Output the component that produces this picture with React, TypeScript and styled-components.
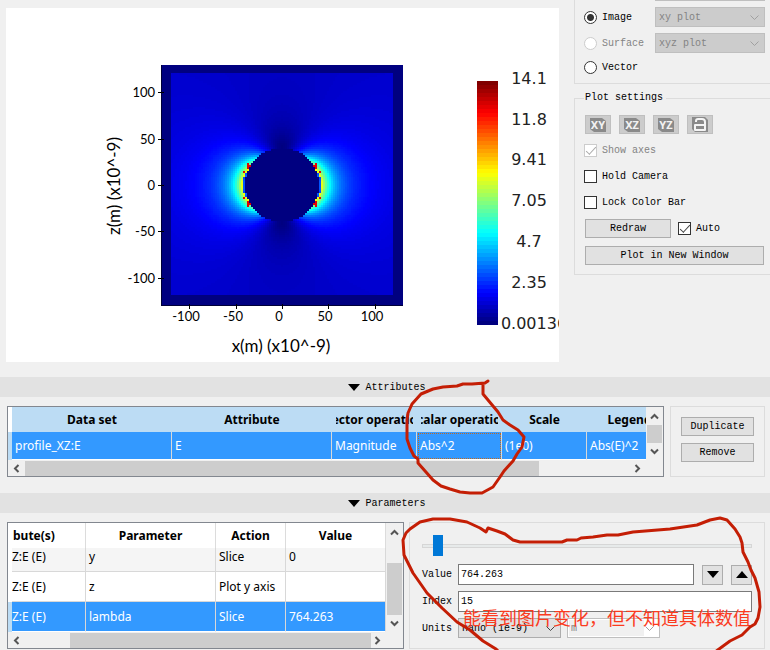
import React, { useState } from "react";
import styled, { createGlobalStyle, css } from "styled-components";

const uiFont = `"Liberation Mono", "Noto Sans CJK SC", monospace`;
const tableFont = `"Noto Sans", "Open Sans", sans-serif`;

const GlobalStyle = createGlobalStyle`
  *, *::before, *::after { box-sizing: border-box; }
  body {
    margin: 0;
    background: #f0f0f0;
    color: #000;
    font: 10px/13px ${uiFont};
  }
  button, input, select { font: inherit; color: inherit; margin: 0; }
`;

/* ---------- field plot data ---------- */

const channel = (x: number) => Math.round(255 * Math.max(0, Math.min(1, x)));

function jet(t: number) {
  const v = Math.max(0, Math.min(1, t));
  const r = channel(1.5 - Math.abs(4 * v - 3));
  const g = channel(1.5 - Math.abs(4 * v - 2));
  const b = channel(1.5 - Math.abs(4 * v - 1));
  return `rgb(${r},${g},${b})`;
}

const FIELD = { left: 155, top: 57, right: 397, bottom: 298, cx: 276, cy: 177, radius: 38 };

const HOT_CELLS = new Set([
  "-34,-20", "-32,-20", "-34,-18", "-34,-22", "-38,-14",
  "-34,18", "-32,18", "-34,16", "-34,20", "-38,12",
]);

function fieldValue(dx: number, dy: number) {
  const r = Math.hypot(dx, dy);
  const side = Math.abs(dx);
  if (HOT_CELLS.has(`${-Math.floor(side / 2) * 2},${Math.floor(dy / 2) * 2}`)) return 0.9;
  if (r < FIELD.radius - 1) return 0;
  const c = dx / r;
  const s = dy / r;
  const wide = 3.36 * Math.pow(37 / r, 2.4);
  const close = 1.1 * Math.pow(37 / r, 3);
  const ex = 1 + wide * c * c - close;
  const ey = wide * c * s;
  const value = (ex * ex + ey * ey) / 14.1;
  if (r < FIELD.radius + 1 && Math.abs(c) > 0.95) return value * 0.3;
  return value;
}

function buildField() {
  const groups = new Map<string, string[]>();
  for (let y = FIELD.top; y < FIELD.bottom; y += 2) {
    const h = Math.min(2, FIELD.bottom - y);
    let start = FIELD.left;
    let current = "";
    const flush = (end: number) => {
      if (!current) return;
      const list = groups.get(current) ?? [];
      list.push(`M${start} ${y}h${end - start}v${h}h${start - end}z`);
      groups.set(current, list);
    };
    for (let x = FIELD.left; x < FIELD.right; x += 2) {
      const absorbing = x < 165 || x >= 387 || y < 64 || y >= 287;
      const value = absorbing ? 0 : fieldValue(x + 1 - FIELD.cx, y + 1 - FIELD.cy);
      const color = jet(Math.round(value * 255) / 255);
      if (color !== current) {
        flush(x);
        current = color;
        start = x;
      }
    }
    flush(FIELD.right);
  }
  return Array.from(groups, ([color, parts]) => ({ color, d: parts.join("") }));
}

const fieldPaths = buildField();
const BAR_STEPS = 61;

const yTicks = [["100", 84], ["50", 131], ["0", 177], ["-50", 223], ["-100", 270]] as const;
const xTicks = [["-100", 183], ["-50", 230], ["0", 276], ["50", 322], ["100", 369]] as const;
const barLabels = [
  ["14.1", 76, 523], ["11.8", 117, 523], ["9.41", 157, 523], ["7.05", 198, 523],
  ["4.7", 239, 523], ["2.35", 280, 523], ["0.00136", 321, 528],
] as const;

/* ---------- page ---------- */

const Page = styled.main`
  position: relative;
  min-height: 100vh;
  overflow: hidden;
`;

const TopRow = styled.section`
  display: flex;
  align-items: flex-start;
  gap: 15px;
  padding-left: 6px;
  margin-bottom: 15px;
`;

const PlotPanel = styled.div`
  flex: 1;
  min-width: 0;
  margin-top: 8px;
  background: #fff;
  overflow: hidden;
`;

const PlotSvg = styled.svg`
  display: block;
  margin: 0 auto;
  max-width: 100%;
`;

const AxisText = styled.text<{ $size: number }>`
  font-family: Lato, sans-serif;
  font-size: ${(p) => p.$size}px;
`;

const BarText = styled.text`
  font-family: "DejaVu Sans", sans-serif;
  font-weight: 400;
  font-size: 16px;
  fill: #222;
`;

function FieldPlot() {
  return (
    <PlotSvg width="553" height="354" viewBox="0 0 553 354" role="img" aria-label="Field intensity">
      <g shapeRendering="crispEdges">
        {fieldPaths.map((p) => <path key={p.color} d={p.d} fill={p.color} />)}
        <path d="M155.5 57V298M155 297.5H397" stroke="#000038" fill="none" />
        {Array.from({ length: BAR_STEPS }, (_, i) => (
          <rect key={i} x="471" y={73 + i * 4} width="21" height="4" fill={jet(1 - i / (BAR_STEPS - 1))} />
        ))}
        {yTicks.map(([label, y]) => <path key={label} d={`M152 ${y}.5h6`} stroke="#000" />)}
        {xTicks.map(([label, x]) => <path key={label} d={`M${x}.5 296v5`} stroke="#000" />)}
      </g>
      {yTicks.map(([label, y]) => (
        <AxisText key={label} $size={13} x="149" y={y + 5} textAnchor="end">{label}</AxisText>
      ))}
      {xTicks.map(([label, x]) => (
        <AxisText key={label} $size={13} x={x - 3} y="313" textAnchor="middle">{label}</AxisText>
      ))}
      <AxisText $size={17} x="275" y="344" textAnchor="middle">x(m) (x10^-9)</AxisText>
      <AxisText $size={17} transform="translate(114 178) rotate(-90)" textAnchor="middle">z(m) (x10^-9)</AxisText>
      {barLabels.map(([label, y, x]) => (
        <BarText key={label} x={x} y={y} textAnchor="middle">{label}</BarText>
      ))}
    </PlotSvg>
  );
}

/* ---------- controls ---------- */

const Sidebar = styled.aside`
  flex: 0 0 196px;
`;

const groupBorder = css`
  border: 1px solid #dcdcdc;
`;

const TypeGroup = styled.div`
  ${groupBorder}
  border-top: 0;
  border-right: 0;
  display: flex;
  flex-direction: column;
  gap: 6px;
  height: 84px;
  padding: 0 5px 0 9px;
`;

const HiddenSelectEdge = styled.div`
  height: 1px;
  margin-left: 71px;
  background: #bfbfbf;
`;

const TypeRow = styled.div`
  display: flex;
  align-items: center;
  justify-content: space-between;
  min-height: 16px;
`;

const CheckLabel = styled.label<{ $disabled?: boolean }>`
  display: flex;
  align-items: center;
  gap: 5px;
  color: ${(p) => (p.$disabled ? "#838383" : "#000")};
`;

const Radio = styled.input.attrs({ type: "radio" })`
  appearance: none;
  width: 13px;
  height: 13px;
  border: 1px solid #333;
  border-radius: 50%;
  background: #fff;
  &:checked { background: radial-gradient(circle, #333 0 3px, #fff 4px); }
  &:disabled { border-color: #ccc; }
`;

const Check = styled.input.attrs({ type: "checkbox" })`
  appearance: none;
  display: grid;
  place-items: center;
  width: 13px;
  height: 13px;
  border: 1px solid #333;
  background: #fff;
  &:checked::before {
    content: "";
    width: 10px;
    height: 5px;
    border: solid #444;
    border-width: 0 0 1px 1px;
    transform: translateY(-1px) rotate(-47deg);
  }
  &:disabled { border-color: #ccc; }
  &:disabled:checked::before { border-color: #aaa; }
`;

const SelectFrame = styled.span<{ $tone: "grey" | "button" | "white"; $width: number }>`
  display: flex;
  align-items: center;
  flex: 0 0 ${(p) => p.$width}px;
  height: 20px;
  padding-right: 4px;
  border: 1px solid ${(p) => (p.$tone === "button" ? "#adadad" : "#bfbfbf")};
  background: ${(p) => ({ grey: "#ccc", button: "#e1e1e1", white: "#fff" })[p.$tone]};
  color: ${(p) => (p.$tone === "button" ? "#000" : "#838383")};
  select {
    appearance: none;
    flex: 1;
    min-width: 0;
    height: 16px;
    margin-left: 1px;
    padding: 0 2px;
    border: 0;
    background: ${(p) => (p.$tone === "white" ? "#f0f0f0" : "transparent")};
    opacity: 1;
  }
  svg { flex: none; color: ${(p) => (p.$tone === "button" ? "#444" : "#a0a0a0")}; }
`;

function Chevron() {
  return (
    <svg width="11" height="7" viewBox="0 0 11 7" aria-hidden="true">
      <path d="M1.5 1.5l4 4 4-4" fill="none" stroke="currentColor" />
    </svg>
  );
}

function Combo(props: { label: string; value: string; tone: "grey" | "button" | "white"; width: number; id?: string }) {
  return (
    <SelectFrame $tone={props.tone} $width={props.width}>
      <select id={props.id} aria-label={props.label} disabled={props.tone !== "button"}>
        <option>{props.value}</option>
      </select>
      <Chevron />
    </SelectFrame>
  );
}

const Settings = styled.fieldset`
  ${groupBorder}
  border-right: 0;
  display: flex;
  flex-direction: column;
  min-width: 0;
  margin: 7px 0 0;
  padding: 10px 6px 9px 9px;
  legend { padding: 0 3px 0 1px; font-size: 10px; line-height: 14px; }
`;

const IconRow = styled.div`
  display: flex;
  gap: 8px;
  margin: 0 0 10px 1px;
`;

const IconButton = styled.button`
  display: grid;
  place-items: center;
  width: 26px;
  height: 19px;
  padding: 0;
  border: 1px solid #bfbfbf;
  background: #ccc;
  text { font: bold 11px "Noto Sans", sans-serif; fill: #f2f2f2; }
`;

const CheckStack = styled.div`
  display: flex;
  flex-direction: column;
  gap: 13px;
`;

const ButtonRow = styled.div`
  display: flex;
  align-items: center;
  gap: 7px;
  margin: 10px 0 8px 1px;
`;

const PushButton = styled.button<{ $width?: number }>`
  width: ${(p) => (p.$width ? `${p.$width}px` : "auto")};
  height: 19px;
  padding: 0;
  border: 1px solid #adadad;
  background: #e1e1e1;
`;

const WideButton = styled(PushButton)`
  margin-left: 1px;
`;

function AxisIcon({ text }: { text: string }) {
  return (
    <svg width="17" height="14" viewBox="0 0 17 14" aria-hidden="true">
      <path d="M0 0h12l4 3v11H4l-4-3z" fill="#8a8a8a" />
      <text x="8" y="11" textAnchor="middle">{text}</text>
    </svg>
  );
}

function LockIcon() {
  return (
    <svg width="17" height="15" viewBox="0 0 17 15" aria-hidden="true">
      <path d="M0 0h13l3 3v12H3l-3-3z" fill="#8a8a8a" />
      <path d="M4 5V4q0-2 2-2h4q3 0 3 3v8H3V8h10" fill="none" stroke="#f4f4f4" strokeWidth="2" strokeLinejoin="round" />
    </svg>
  );
}

/* ---------- sections ---------- */

const SectionBar = styled.button`
  display: flex;
  align-items: center;
  justify-content: center;
  gap: 5px;
  width: 100%;
  height: 20px;
  padding: 0 0 0 4px;
  border: 0;
  background: #e2e2e2;
`;

function Triangle({ up = false }: { up?: boolean }) {
  return (
    <svg width="12" height="7" viewBox="0 0 12 7" aria-hidden="true">
      <path d={up ? "M0 7h12L6 0z" : "M0 0h12L6 7z"} fill="#000" />
    </svg>
  );
}

const SectionBody = styled.section<{ $gap: number }>`
  display: flex;
  align-items: stretch;
  gap: ${(p) => p.$gap}px;
  padding: 9px 5px 0 7px;
`;

const AttributesBody = styled(SectionBody)`
  margin-bottom: 16px;
`;

const TableFrame = styled.div<{ $rows: string }>`
  display: grid;
  grid-template-columns: minmax(0, 1fr) 17px;
  grid-template-rows: ${(p) => p.$rows};
  flex: 1;
  min-width: 0;
  border: 1px solid #82878f;
  background: #f0f0f0;
`;

const ParameterFrame = styled(TableFrame)`
  flex: 0 1 397px;
`;

const TableView = styled.div`
  overflow: hidden;
  background: #fff;
`;

const DataTable = styled.table`
  table-layout: fixed;
  border-collapse: separate;
  border-spacing: 0;
  width: 100%;
  font: 12px/16px ${tableFont};
`;

const HeadCell = styled.th<{ $blue?: boolean; $cut?: boolean }>`
  height: 25px;
  padding: 0 4px;
  background: ${(p) => (p.$blue ? "#bcdcf4" : "#fff")};
  border-right: ${(p) => (p.$blue ? "0" : "1px solid #dcdcdc")};
  ${(p) => p.$cut && css`padding-left: 1px;`}
  span {
    display: flex;
    justify-content: ${(p) => (p.$cut ? "flex-start" : "center")};
    overflow: hidden;
    white-space: nowrap;
  }
`;

const Stub = styled.th<{ $on?: boolean }>`
  padding: 0;
  background: ${(p) => (p.$on ? "#bcdcf4" : "#fff")};
`;

const Cell = styled.td<{ $on?: boolean; $shade?: boolean; $height: number; $cut?: boolean; $focus?: boolean }>`
  height: ${(p) => p.$height}px;
  padding: 1px 3px 0;
  overflow: hidden;
  white-space: nowrap;
  border-right: 1px solid #d8d8d8;
  border-bottom: 1px solid ${(p) => (p.$on ? "#fff" : "#d8d8d8")};
  background: ${(p) => (p.$on ? "#3399ff" : p.$shade ? "#f5f5f5" : "#fff")};
  color: ${(p) => (p.$on ? "#fff" : "#000")};
  ${(p) => p.$shade && css`vertical-align: top;`}
  ${(p) => p.$cut && css`padding-left: 0;`}
  ${(p) => p.$focus && css`outline: 1px dotted #c06a20; outline-offset: -2px;`}
`;

const VBar = styled.div`
  display: flex;
  flex-direction: column;
  align-items: center;
  justify-content: space-between;
  padding: 5px 0 4px;
`;

const VThumb = styled.div<{ $height: number; $push: number }>`
  width: 15px;
  height: ${(p) => p.$height}px;
  margin-top: ${(p) => p.$push}px;
  background: #cdcdcd;
`;

const HBar = styled.div`
  display: flex;
  align-items: center;
  padding: 0 4px;
`;

const HTrack = styled.div<{ $before: number; $after: number }>`
  flex: 1;
  align-self: stretch;
  padding: 1px ${(p) => p.$after}px 0 ${(p) => p.$before}px;
  div { height: 100%; background: #cdcdcd; }
`;

const turns = { up: 0, right: 90, down: 180, left: 270 };

function Arrow({ to }: { to: keyof typeof turns }) {
  return (
    <svg width="9" height="9" viewBox="0 0 9 9" aria-hidden="true">
      <path d="M1 6.500l3.500-3.500L8 6.500" fill="none" stroke="#555" strokeWidth="2" transform={`rotate(${turns[to]} 4.500 4.500)`} />
    </svg>
  );
}

const attributeColumns = ["Data set", "Attribute", "Vector operation", "Scalar operation", "Scale", "Legend"];
const attributeValues = ["profile_XZ:E", "E", "Magnitude", "Abs^2", "(1e0)", "Abs(E)^2"];

const AttributeTable = styled(DataTable)`
  min-width: 664px;
`;

const ActionGroup = styled.div`
  ${groupBorder}
  display: flex;
  flex-direction: column;
  gap: 7px;
  flex: 0 0 95px;
  padding: 10px;
`;

const parameterRows = [
  ["Z:E (E)", "y", "Slice", "0"],
  ["Z:E (E)", "z", "Plot y axis", ""],
  ["Z:E (E)", "lambda", "Slice", "764.263"],
];

const ValueGroup = styled.div`
  ${groupBorder}
  display: flex;
  flex-direction: column;
  flex: 1;
  min-width: 0;
  padding: 12px 12px 10px;
`;

const Slider = styled.input.attrs({ type: "range" })`
  appearance: none;
  display: block;
  width: 100%;
  height: 21px;
  margin: 0 0 8px;
  background: transparent;
  &::-webkit-slider-runnable-track {
    height: 4px;
    border: 1px solid #d6d6d6;
    background: #e7eaea;
  }
  &::-webkit-slider-thumb {
    appearance: none;
    width: 10px;
    height: 21px;
    margin-top: -10px;
    background: #0078d7;
  }
`;

const FieldRow = styled.div<{ $space?: number }>`
  display: flex;
  align-items: center;
  gap: 6px;
  margin-bottom: ${(p) => p.$space ?? 0}px;
  > label { flex: 0 0 30px; }
`;

const TextBox = styled.input`
  flex: 1;
  min-width: 0;
  height: 21px;
  padding: 0 2px;
  border: 1px solid #7a7a7a;
  background: #fff;
`;

const StepButton = styled.button`
  display: grid;
  place-items: center;
  flex: 0 0 21px;
  height: 20px;
  margin-left: 2px;
  padding: 0;
  border: 1px solid #adadad;
  background: #e1e1e1;
`;

/* ---------- hand annotations ---------- */

const Ink = styled.svg`
  position: absolute;
  left: 0;
  top: 0;
  pointer-events: none;
`;

const Note = styled.p`
  position: absolute;
  left: 463px;
  top: 604px;
  margin: 0;
  font: 18px/26px "Noto Sans CJK SC", sans-serif;
  color: #fb3b1e;
  white-space: nowrap;
  pointer-events: none;
`;

const scalarLoop =
  "M488 381L485 383L472 384L463 384L457 386L443 387L433 389L421 394L412 404L408 413L407 420L407 439L410 448L414 456L418 459L418 463L433 480L441 486L450 489L460 492L470 493L482 493L493 487L500 477L504 471L513 461L517 454L522 447L524 437L518 430L510 425L503 420L498 412L483 394L483 384";
const valueLoop =
  "M499 652L496 649L483 641L470 630L457 622L442 608L427 593L413 573L404 555L403 540L406 533L410 529L420 522L433 519L450 519L467 522L480 528L486 532L488 528L497 531L505 534L513 540L520 542L562 542L567 540L577 540L581 538L593 537L607 535L618 535L633 532L670 529L697 525L710 520L720 518L727 520L735 529L740 537L742 543L743 552L748 562L751 570L755 578L759 592L760 607L758 618L755 624L750 627L742 635L730 641L715 652";

export default function App() {
  const [mode, setMode] = useState("Image");
  const [index, setIndex] = useState("15");
  const [value, setValue] = useState("764.263");
  const [slider, setSlider] = useState("3");

  return (
    <Page>
      <GlobalStyle />
      <TopRow>
        <PlotPanel><FieldPlot /></PlotPanel>
        <Sidebar>
          <TypeGroup>
            <HiddenSelectEdge />
            {[["Image", "xy plot"], ["Surface", "xyz plot"], ["Vector", ""]].map(([name, option]) => (
              <TypeRow key={name}>
                <CheckLabel $disabled={name === "Surface"}>
                  <Radio
                    name="plot-type"
                    checked={mode === name}
                    disabled={name === "Surface"}
                    onChange={() => setMode(name)}
                  />
                  {name}
                </CheckLabel>
                {option && <Combo label={`${name} plane`} value={option} tone="grey" width={110} />}
              </TypeRow>
            ))}
          </TypeGroup>
          <Settings>
            <legend>Plot settings</legend>
            <IconRow>
              {["XY", "XZ", "YZ"].map((plane) => (
                <IconButton key={plane} type="button" aria-label={`${plane} view`}><AxisIcon text={plane} /></IconButton>
              ))}
              <IconButton type="button" aria-label="Lock view"><LockIcon /></IconButton>
            </IconRow>
            <CheckStack>
              <CheckLabel $disabled><Check disabled defaultChecked />Show axes</CheckLabel>
              <CheckLabel><Check />Hold Camera</CheckLabel>
              <CheckLabel><Check />Lock Color Bar</CheckLabel>
            </CheckStack>
            <ButtonRow>
              <PushButton type="button" $width={86}>Redraw</PushButton>
              <CheckLabel><Check defaultChecked />Auto</CheckLabel>
            </ButtonRow>
            <WideButton type="button">Plot in New Window</WideButton>
          </Settings>
        </Sidebar>
      </TopRow>

      <SectionBar type="button" aria-expanded="true"><Triangle />Attributes</SectionBar>
      <AttributesBody $gap={6}>
        <TableFrame $rows="53px 16px">
          <TableView>
            <AttributeTable>
              <colgroup>
                <col width="4" /><col width="160" /><col width="160" /><col width="85" />
                <col width="85" /><col width="85" /><col width="85" />
              </colgroup>
              <thead>
                <tr>
                  <Stub />
                  {attributeColumns.map((c) => <HeadCell key={c} $blue><span>{c}</span></HeadCell>)}
                </tr>
              </thead>
              <tbody>
                <tr>
                  <Stub $on />
                  {attributeValues.map((v) => <Cell key={v} $on $height={28} $focus={v === "Abs^2"}>{v}</Cell>)}
                </tr>
              </tbody>
            </AttributeTable>
          </TableView>
          <VBar><Arrow to="up" /><VThumb $height={18} $push={0} /><Arrow to="down" /></VBar>
          <HBar>
            <Arrow to="left" />
            <HTrack $before={4} $after={94}><div /></HTrack>
            <Arrow to="right" />
          </HBar>
        </TableFrame>
        <ActionGroup>
          <PushButton type="button">Duplicate</PushButton>
          <PushButton type="button">Remove</PushButton>
        </ActionGroup>
      </AttributesBody>

      <SectionBar type="button" aria-expanded="true"><Triangle />Parameters</SectionBar>
      <SectionBody $gap={5}>
        <ParameterFrame $rows="109px 16px">
          <TableView>
            <DataTable>
              <colgroup>
                <col width="4" /><col width="74" /><col width="130" /><col width="70" /><col />
              </colgroup>
              <thead>
                <tr>
                  <Stub />
                  {["bute(s)", "Parameter", "Action", "Value"].map((c, i) => (
                    <HeadCell key={c} $cut={i === 0}><span>{c}</span></HeadCell>
                  ))}
                </tr>
              </thead>
              <tbody>
                {parameterRows.map((row, r) => (
                  <tr key={row[1]}>
                    <Stub $on={r === 2} />
                    {row.map((v, c) => (
                      <Cell key={c} $on={r === 2} $shade={r === 0} $height={r === 0 ? 24 : 30} $cut={c === 0}>{v}</Cell>
                    ))}
                  </tr>
                ))}
              </tbody>
            </DataTable>
          </TableView>
          <VBar><Arrow to="up" /><VThumb $height={52} $push={22} /><Arrow to="down" /></VBar>
          <HBar>
            <Arrow to="left" />
            <HTrack $before={49} $after={2}><div /></HTrack>
            <Arrow to="right" />
          </HBar>
        </ParameterFrame>
        <ValueGroup>
          <Slider aria-label="Parameter value" min="0" max="100" value={slider} onChange={(e) => setSlider(e.target.value)} />
          <FieldRow $space={6}>
            <label htmlFor="value">Value</label>
            <TextBox id="value" value={value} onChange={(e) => setValue(e.target.value)} />
            <StepButton type="button" aria-label="Previous value"><Triangle /></StepButton>
            <StepButton type="button" aria-label="Next value"><Triangle up /></StepButton>
          </FieldRow>
          <FieldRow $space={6}>
            <label htmlFor="index">Index</label>
            <TextBox id="index" value={index} onChange={(e) => setIndex(e.target.value)} />
          </FieldRow>
          <FieldRow>
            <label htmlFor="units">Units</label>
            <Combo id="units" label="Units" value="nano (1e-9)" tone="button" width={103} />
            <Combo label="Base unit" value="m" tone="white" width={93} />
          </FieldRow>
        </ValueGroup>
      </SectionBody>

      <Note>能看到图片变化，但不知道具体数值</Note>
      <Ink width="770" height="650" viewBox="0 0 770 650" aria-hidden="true">
        <g fill="none" stroke="#c41e05" strokeWidth="3" strokeLinejoin="round" strokeLinecap="round">
          <path d={scalarLoop} />
          <path d={valueLoop} />
        </g>
      </Ink>
    </Page>
  );
}
